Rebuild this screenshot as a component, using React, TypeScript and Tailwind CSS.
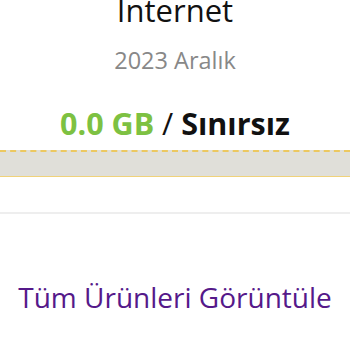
export default function App() {
  return (
    <div className="w-[350px] h-[350px] bg-white overflow-hidden flex flex-col" style={{ fontFamily: '"Open Sans", "Noto Sans", sans-serif' }}>
      <div className="flex flex-col items-center">
        <div className="mt-[-5px] text-[31px] leading-[31px] text-[#111] font-medium">Internet</div>
        <div className="mt-[23px] text-[23.5px] leading-[23.5px] text-[#888888]">2023 Aralık</div>
        <div className="mt-[35px] text-[30.5px] leading-[30px] font-bold">
          <span className="text-[#7dc142]">0.0 GB</span>
          <span className="text-[#111] font-normal"> / </span>
          <span className="text-[#111]">Sınırsız</span>
        </div>
      </div>
      <div className="mt-[12px] border-b border-[#f0d27a]">
        <div className="h-[26px] bg-[#e0dfd9] border-t-2 border-dashed border-[#ecc860]" />
      </div>
      <div className="mt-[35px] h-[2px] bg-[#eeeeee]" />
      <div className="flex justify-center">
        <div className="mt-[69px] text-[28px] leading-[28px] text-[#55198a] font-medium">Tüm Ürünleri Görüntüle</div>
      </div>
    </div>
  );
}
